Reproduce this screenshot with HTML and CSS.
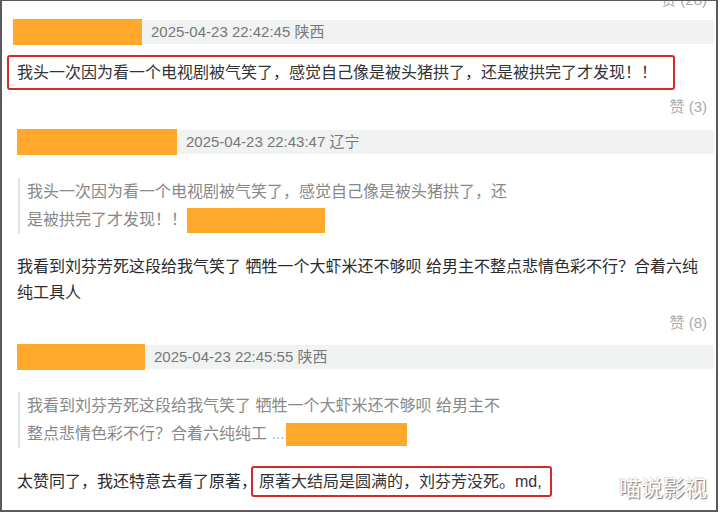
FILE: index.html
```html
<!DOCTYPE html>
<html lang="zh-CN">
  <head>
    <meta charset="UTF-8" />
    <meta name="viewport" content="width=device-width, initial-scale=1.0" />
    <title>评论</title>
    <link rel="stylesheet" href="styles.css">
  </head>
  <body>
    <div class="frame">
      <div class="likes likes-top">赞 (28)</div>

      <div class="meta first">
        <span class="name wide-a"></span>
        <span class="stamp">2025-04-23 22:42:45 陕西</span>
      </div>
      <div class="boxed">我头一次因为看一个电视剧被气笑了，感觉自己像是被头猪拱了，还是被拱完了才发现！！</div>
      <div class="likes">赞 (3)</div>

      <div class="meta second">
        <span class="name wide-b"></span>
        <span class="stamp">2025-04-23 22:43:47 辽宁</span>
      </div>
      <div class="quote">我头一次因为看一个电视剧被气笑了，感觉自己像是被头猪拱了，还是被拱完了才发现！！<span class="mask mask-a"></span></div>
      <div class="text">我看到刘芬芳死这段给我气笑了 牺牲一个大虾米还不够呗 给男主不整点悲情色彩不行？合着六纯纯工具人</div>
      <div class="likes">赞 (8)</div>

      <div class="meta third">
        <span class="name"></span>
        <span class="stamp">2025-04-23 22:45:55 陕西</span>
      </div>
      <div class="quote quote-b">我看到刘芬芳死这段给我气笑了 牺牲一个大虾米还不够呗 给男主不整点悲情色彩不行？合着六纯纯工 <span class="dots">...</span><span class="mask mask-b"></span></div>
      <div class="text last">太赞同了，我还特意去看了原著，<span class="mark">原著大结局是圆满的，刘芬芳没死。md,</span></div>

      <div class="brand">喵说影视</div>
    </div>
  </body>
</html>
```

FILE: styles.css
```css
* {
  box-sizing: border-box;
}
body {
  margin: 0;
  background-color: #fff;
  font-family: "Liberation Sans", "Noto Sans CJK SC", sans-serif;
}
.frame {
  position: relative;
  width: 718px;
  height: 512px;
  border: 2px solid #5b5b5b;
  border-top-width: 1px;
  overflow: hidden;
  background-color: #fff;
}
.likes {
  margin-top: 7px;
  padding-right: 9px;
  text-align: right;
  font-size: 15px;
  line-height: 20px;
  color: #aaa;
}
.likes-top {
  margin-top: -11px;
}
.meta {
  display: flex;
  align-items: center;
  margin: 12px 2px 0 15px;
}
.meta.first {
  margin-top: 9px;
  margin-left: 11px;
}
.meta.third {
  margin-top: 11px;
}
.name {
  width: 128px;
  height: 26px;
  background-color: #ffa82b;
}
.name.wide-a {
  width: 129px;
}
.name.wide-b {
  width: 160px;
}
.stamp {
  flex: 1;
  height: 24px;
  line-height: 24px;
  padding-left: 9px;
  background-color: #f1f3f3;
  color: #777;
  font-size: 15px;
}
.boxed {
  margin: 10px 41px 0 5px;
  padding: 0 8px;
  border: 2px solid #d32a2a;
  border-radius: 3px;
  font-size: 16px;
  line-height: 31px;
  color: #333;
}
.quote {
  width: 497px;
  margin: 23px 0 0 16px;
  padding-left: 7px;
  border-left: 2px solid #e2e2e2;
  font-size: 16px;
  line-height: 28px;
  color: #888;
}
.quote-b {
  margin-top: 22px;
}
.dots {
  color: #bbb;
}
.mask {
  display: inline-block;
  vertical-align: middle;
  background-color: #ffa82b;
}
.mask-a {
  width: 138px;
  height: 25px;
}
.mask-b {
  width: 121px;
  height: 23px;
  margin-left: 1px;
}
.text {
  margin: 20px 9px 0 15px;
  font-size: 16px;
  line-height: 26px;
  color: #2b2b2b;
}
.text.last {
  margin-top: 18px;
  line-height: 31px;
}
.mark {
  display: inline-block;
  margin-left: -6px;
  padding: 0 8px 0 6px;
  border: 2px solid #d32a2a;
  border-radius: 3px;
  line-height: 27px;
  color: #333;
}
.brand {
  position: absolute;
  right: 9px;
  bottom: 10px;
  font-size: 22px;
  line-height: 22px;
  color: #fff;
  text-shadow: 1px 1px 1px #777, -1px -1px 0 #ddd;
}
```
